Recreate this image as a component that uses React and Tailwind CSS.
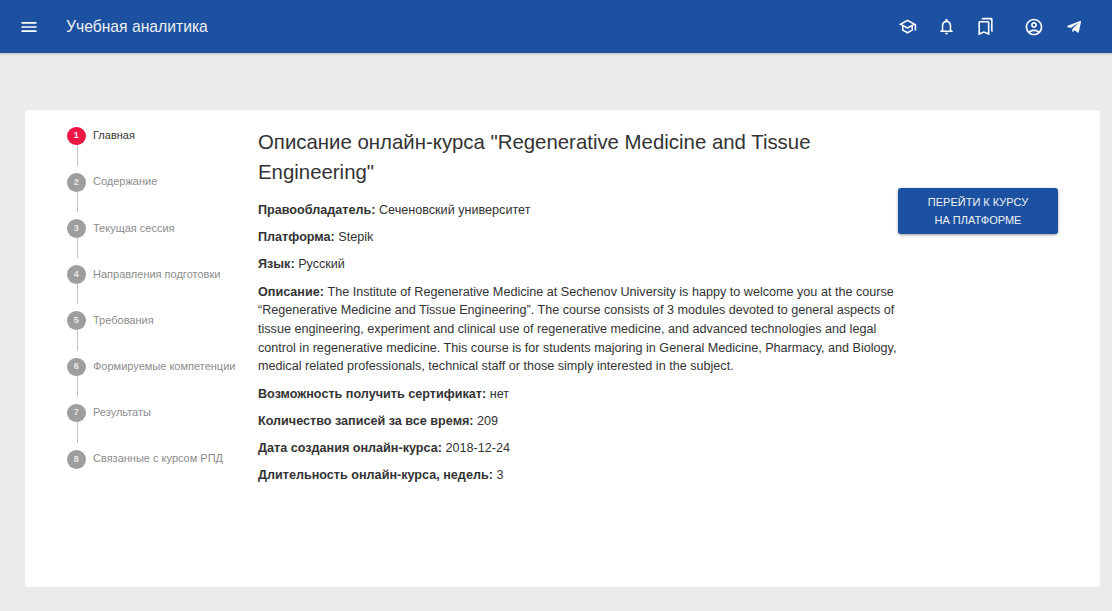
import { FaTelegramPlane } from 'react-icons/fa';

const steps = [
    'Главная',
    'Содержание',
    'Текущая сессия',
    'Направления подготовки',
    'Требования',
    'Формируемые компетенции',
    'Результаты',
    'Связанные с курсом РПД',
];

const MaterialIcon = ({ d, className = 'w-5 h-5' }) => (
    <svg className={className} viewBox="0 0 24 24" fill="currentColor">
        <path d={d} />
    </svg>
);

const icons = {
    menu: 'M3 18h18v-2H3v2zm0-5h18v-2H3v2zm0-7v2h18V6H3z',
    school: 'M12 3L1 9l4 2.18v6L12 21l7-3.82v-6l2-1.09V17h2V9L12 3zm6.82 6L12 12.72 5.18 9 12 5.28 18.82 9zM17 15.99l-5 2.73-5-2.73v-3.72L12 15l5-2.73v3.72z',
    bell: 'M12 22c1.1 0 2-.9 2-2h-4c0 1.1.9 2 2 2zm6-6v-5c0-3.07-1.63-5.64-4.5-6.32V4c0-.83-.67-1.5-1.5-1.5s-1.5.67-1.5 1.5v.68C7.64 5.36 6 7.92 6 11v5l-2 2v1h16v-1l-2-2zm-2 1H8v-6c0-2.48 1.51-4.5 4-4.5s4 2.02 4 4.5v6z',
    bookmarks: 'M15 7v12.97l-4.21-1.81-.79-.34-.79.34L5 19.97V7h10m4-6H8.99C7.89 1 7 1.9 7 3h10c1.1 0 2 .9 2 2v13l2 1V3c0-1.1-.9-2-2-2zm-4 4H5c-1.1 0-2 .9-2 2v16l7-3 7 3V7c0-1.1-.9-2-2-2z',
    account: 'M12 2C6.48 2 2 6.48 2 12s4.48 10 10 10 10-4.48 10-10S17.52 2 12 2zM7.35 18.5C8.66 17.56 10.26 17 12 17s3.34.56 4.65 1.5c-1.31.94-2.91 1.5-4.65 1.5s-3.34-.56-4.65-1.5zm10.79-1.38C16.45 15.8 14.32 15 12 15s-4.45.8-6.14 2.12C4.7 15.73 4 13.95 4 12c0-4.42 3.58-8 8-8s8 3.58 8 8c0 1.95-.7 3.73-1.86 5.12zM12 6c-1.93 0-3.5 1.57-3.5 3.5S10.07 13 12 13s3.5-1.57 3.5-3.5S13.93 6 12 6zm0 5c-.83 0-1.5-.67-1.5-1.5S11.17 8 12 8s1.5.67 1.5 1.5S12.83 11 12 11z',
};

const Field = ({ label, children }) => (
    <p className="mb-[8.45px]">
        <b className="font-bold">{label}</b> {children}
    </p>
);

const App = () => {
    return (
        <div className="min-h-[611px] bg-[#ebebeb] font-['Liberation_Sans',Arial,sans-serif] flex flex-col">
            <header className="h-[53px] bg-[#1c51a1] text-white flex items-center pl-[19px] pr-[30px] shadow-[0_1px_2px_rgba(0,0,0,0.2)]">
                <MaterialIcon d={icons.menu} />
                <span className="ml-[27px] text-[15.7px] text-[#f1f1f1]">Учебная аналитика</span>
                <div className="ml-auto flex items-center">
                    <MaterialIcon d={icons.school} className="w-[19px] h-[19px]" />
                    <MaterialIcon d={icons.bell} className="w-[19px] h-[19px] ml-5" />
                    <MaterialIcon d={icons.bookmarks} className="w-[19px] h-[19px] ml-5" />
                    <MaterialIcon d={icons.account} className="w-[20px] h-[20px] ml-[29px]" />
                    <FaTelegramPlane className="w-4 h-4 ml-[22px]" />
                </div>
            </header>

            <main className="mt-[57px] ml-[25px] mr-3 h-[477px] bg-white rounded-[3px] flex pt-[17px] pl-[42px] shadow-[0_0_1px_rgba(0,0,0,0.08)]">
                <nav className="w-[191px] shrink-0 pt-[0.2px]">
                    {steps.map((step, index) => (
                        <div key={step} className="flex h-[46.18px]">
                            <div className="w-[26px] shrink-0 flex flex-col items-start">
                                <div className={`w-[18.67px] h-[18.67px] -mt-[0.4px] rounded-full text-[#e8e8e8] text-[9px] font-bold flex items-center justify-center ${index === 0 ? 'bg-[#ee1846]' : 'bg-[#9e9e9e]'}`}>
                                    {index + 1}
                                </div>
                                {index < steps.length - 1 && <div className="w-px h-[20.5px] ml-[10px] bg-[#c4c4c4]" />}
                            </div>
                            <span className={`text-[11px] leading-4 whitespace-nowrap ${index === 0 ? 'text-[#333333]' : 'text-[#8c8c8c]'}`}>
                                {step}
                            </span>
                        </div>
                    ))}
                </nav>

                <section className="w-[640px] shrink-0 text-[12.62px] leading-[18.7px] text-[#333333]">
                    <h1 className="text-[20.4px] leading-[30px] mb-[14.15px] text-[#333333]">
                        Описание онлайн-курса "Regenerative Medicine and Tissue Engineering"
                    </h1>
                    <Field label="Правообладатель:">Сеченовский университет</Field>
                    <Field label="Платформа:">Stepik</Field>
                    <Field label="Язык:">Русский</Field>
                    <Field label="Описание:">
                        The Institute of Regenerative Medicine at Sechenov University is happy to welcome you at the course “Regenerative Medicine and Tissue Engineering”. The course consists of 3 modules devoted to general aspects of tissue engineering, experiment and clinical use of regenerative medicine, and advanced technologies and legal control in regenerative medicine. This course is for students majoring in General Medicine, Pharmacy, and Biology, medical related professionals, technical staff or those simply interested in the subject.
                    </Field>
                    <Field label="Возможность получить сертификат:">нет</Field>
                    <Field label="Количество записей за все время:">209</Field>
                    <Field label="Дата создания онлайн-курса:">2018-12-24</Field>
                    <Field label="Длительность онлайн-курса, недель:">3</Field>
                </section>

                <div className="pt-[61px]">
                    <button className="w-40 h-[46px] rounded-[3px] bg-[#1c51a1] text-[#f1f1f1] text-[11px] leading-[18px] shadow-[0_1px_3px_rgba(0,0,0,0.4)]">
                        ПЕРЕЙТИ К КУРСУ
                        <br />
                        НА ПЛАТФОРМЕ
                    </button>
                </div>
            </main>
        </div>
    );
};

export default App;
